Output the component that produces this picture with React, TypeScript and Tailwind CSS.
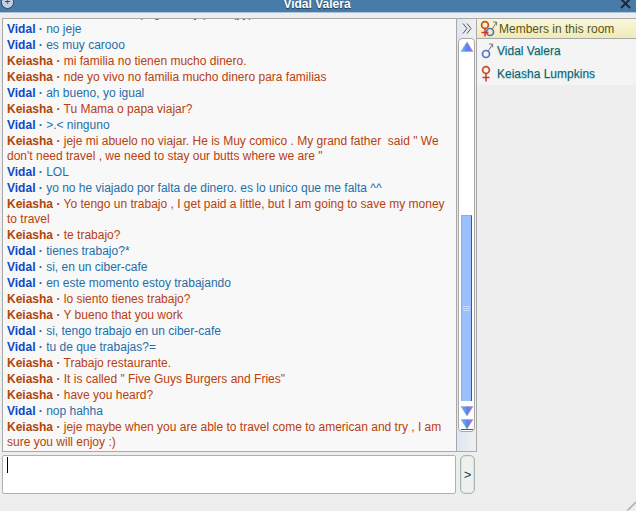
const V = "Vidal";
const K = "Keiasha";
const messages: [string, string][] = [
  [V, "no jeje"],
  [V, "es muy carooo"],
  [K, "mi familia no tienen mucho dinero."],
  [K, "nde yo vivo no familia mucho dinero para familias"],
  [V, "ah bueno, yo igual"],
  [K, "Tu Mama o papa viajar?"],
  [V, ">.< ninguno"],
  [K, "jeje mi abuelo no viajar. He is Muy comico . My grand father  said \" We don't need travel , we need to stay our butts where we are \""],
  [V, "LOL"],
  [V, "yo no he viajado por falta de dinero. es lo unico que me falta ^^"],
  [K, "Yo tengo un trabajo , I get paid a little, but I am going to save my money to travel"],
  [K, "te trabajo?"],
  [V, "tienes trabajo?*"],
  [V, "si, en un ciber-cafe"],
  [V, "en este momento estoy trabajando"],
  [K, "lo siento tienes trabajo?"],
  [K, "Y bueno that you work"],
  [V, "si, tengo trabajo en un ciber-cafe"],
  [V, "tu de que trabajas?="],
  [K, "Trabajo restaurante."],
  [K, "It is called \" Five Guys Burgers and Fries\""],
  [K, "have you heard?"],
  [V, "nop hahha"],
  [K, "jeje maybe when you are able to travel come to american and try , I am sure you will enjoy :)"],
];

function Female({ className = "" }: { className?: string }) {
  return (
    <svg width="11" height="17" viewBox="0 0 11 17" className={className}>
      <circle cx="5" cy="5" r="3.4" fill="none" stroke="#c8501f" strokeWidth="1.7" />
      <path d="M5 8.5v8M1.5 12.5h7" stroke="#d4352a" strokeWidth="1.5" fill="none" />
    </svg>
  );
}

function Male({ className = "" }: { className?: string }) {
  return (
    <svg width="13" height="17" viewBox="0 0 13 17" className={className}>
      <circle cx="5" cy="12" r="3.5" fill="none" stroke="#4a78c0" strokeWidth="1.7" />
      <path d="M7.2 9.2 11.4 2.4M8 2h3.6v3.4" stroke="#777" strokeWidth="1" fill="none" />
    </svg>
  );
}

function Tri({ down = false, bar = false }: { down?: boolean; bar?: boolean }) {
  return (
    <svg width="14" height="11" viewBox="0 0 14 11" className="block">
      <defs>
        <linearGradient id="tg" x1="0" x2="1" y1="0" y2="0">
          <stop offset="0" stopColor="#5ec4f4" />
          <stop offset="0.5" stopColor="#4f8cf0" />
          <stop offset="0.5" stopColor="#7d6cf0" />
          <stop offset="1" stopColor="#8f80f2" />
        </linearGradient>
      </defs>
      <polygon points={down ? "1,0.5 13,0.5 7,10" : "1,10.5 13,10.5 7,1"} fill="url(#tg)" stroke="#9a9aa8" strokeWidth="0.5" />
      {bar && <path d="M1 10.5h12" stroke="#555" strokeWidth="1" />}
    </svg>
  );
}

export default function App() {
  return (
    <div className="relative flex h-[511px] w-[636px] flex-col overflow-hidden bg-[#eeeeee] font-['Liberation_Sans',Arial,sans-serif] text-[12px]">
      <header className="relative flex h-[13px] shrink-0 items-end justify-center border-b border-[#a9c4dc] bg-[#497ba8]">
        <span className="absolute left-[1px] top-[-5px] flex h-[14px] w-[13px] items-center justify-center rounded-full border border-[#30435c] bg-[#c4cfe6] text-[10px] leading-none text-[#22409a]">
          +
        </span>
        <span className="mb-[1px] mr-[2px] text-[12px] font-bold leading-[14px] text-white [text-shadow:0_1px_1px_#1d3550]">Vidal Valera</span>
        <svg width="11" height="9" viewBox="0 0 11 9" className="absolute right-[5px] top-0">
          <path d="M1 -1 10 8M10 -1 1 8" stroke="#1c2a38" strokeWidth="2" />
        </svg>
      </header>

      <div className="mt-[5px] flex h-[434px] shrink-0 pl-[2px]">
        <div className="h-full w-[454px] overflow-hidden border border-r-0 border-[#a8a8a8] bg-[#f8f8f8] pl-[4px] pr-[10px] leading-[15px]">
          <div className="mt-[-13px] whitespace-pre-wrap pb-[1px] text-[#b8410e]">
            <b className="text-[#b0450a]">{K}</b> · mi familia nos pagan muy poco (yy)
          </div>
          {messages.map(([who, text], i) => (
            <div key={i} className={"whitespace-pre-wrap pb-[1px] " + (who === V ? "text-[#1f6fa8]" : "text-[#b8410e]")}>
              <b className={who === V ? "text-[#0f48c4]" : "text-[#b0450a]"}>{who}</b> <b className="font-bold">·</b> {text}
            </div>
          ))}
        </div>

        <div className="flex h-full w-[21px] shrink-0 flex-col items-center border border-[#a8a8a8] bg-gradient-to-r from-[#dfe6f2] to-[#f0f0f0]">
          <div className="flex h-[19px] shrink-0 items-center">
            <svg width="10" height="11" viewBox="0 0 10 11">
              <path d="M1 0.5 5 5.5 1 10.5M5 0.5 9 5.5 5 10.5" stroke="#555" strokeWidth="1" fill="none" />
            </svg>
          </div>
          <div className="flex h-[394px] w-[17px] shrink-0 flex-col items-center rounded-[4px] border border-[#a8a8a8] bg-white">
            <div className="mt-[2px]"><Tri /></div>
            <div className="mt-[163px] flex h-[186px] w-[11px] shrink-0 flex-col justify-end border border-b-0 border-[#555] border-l-[#aaa] border-t-[#aaa] bg-[#99bfff]">
              <div className="mb-[90px] flex flex-col gap-[1px] px-[1px]">
                <i className="h-[1px] bg-[#c8dcff]" /><i className="h-[1px] bg-[#c8dcff]" /><i className="h-[1px] bg-[#c8dcff]" />
              </div>
            </div>
            <div className="mt-[5px]"><Tri down /></div>
            <div className="mt-[2px]"><Tri down bar /></div>
          </div>
        </div>

        <aside className="flex-1 text-[#00636e] [text-shadow:0_1px_1px_#b5d0d4]">
          <div className="flex h-[21px] items-center gap-[0px] border-y border-[#a8a8a8] bg-gradient-to-b from-[#f9f7dc] to-[#efeab8] pl-[3px] text-[#5a5418] [text-shadow:none]">
            <span className="relative h-[17px] w-[19px] shrink-0">
              <Male className="absolute left-[5px] top-0" />
              <Female className="absolute left-0 top-0" />
            </span>
            <span>Members in this room</span>
          </div>
          <div className="flex h-[23px] items-center gap-[3px] bg-[#f4f4f4] pl-[4px]">
            <Male className="shrink-0" />
            <span>Vidal Valera</span>
          </div>
          <div className="flex h-[23px] items-center gap-[5px] bg-[#f4f4f4] pl-[4px]">
            <Female className="shrink-0" />
            <span>Keiasha Lumpkins</span>
          </div>
        </aside>
      </div>

      <div className="mt-[3px] flex h-[39px] shrink-0 pl-[2px]">
        <div className="h-full w-[454px] rounded-[2px] border border-[#b0b0b0] bg-white pl-[4px] pt-[1px]">
          <div className="h-[16px] w-[1px] bg-black" />
        </div>
        <button className="ml-[4px] flex h-[39px] w-[15px] items-center justify-center rounded-[5px] border border-[#a8b4b0] bg-[#eef2ef] text-[13px] text-[#103a5a] shadow-[inset_0_0_0_1px_#d8e4dc]">
          &gt;
        </button>
      </div>

      <svg width="12" height="12" viewBox="0 0 12 12" className="absolute bottom-0 right-0">
        <path d="M3 11.5 12 2.5M4 11.5 12 3.5" stroke="#888" strokeWidth="0.8" />
      </svg>
    </div>
  );
}
